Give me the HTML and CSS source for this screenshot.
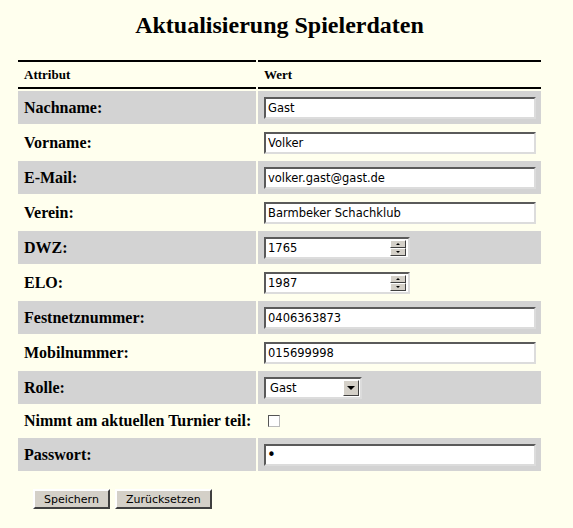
FILE: index.html
```html
<!DOCTYPE html>
<html lang="de">
<head>
<meta charset="utf-8">
<title>Aktualisierung Spielerdaten</title>
<link rel="stylesheet" href="styles.css">
</head>
<body>
<div class="page">
  <h2 class="title">Aktualisierung Spielerdaten</h2>
  <form class="form">
    <table class="grid">
      <colgroup><col class="c1"><col class="c2"></colgroup>
      <thead>
        <tr><th>Attribut</th><th>Wert</th></tr>
      </thead>
      <tbody>
        <tr class="odd"><td class="lbl">Nachname:</td><td><input class="txt" type="text" value="Gast"></td></tr>
        <tr><td class="lbl">Vorname:</td><td><input class="txt" type="text" value="Volker"></td></tr>
        <tr class="odd"><td class="lbl">E-Mail:</td><td><input class="txt" type="text" value="volker.gast@gast.de"></td></tr>
        <tr><td class="lbl">Verein:</td><td><input class="txt" type="text" value="Barmbeker Schachklub"></td></tr>
        <tr class="odd"><td class="lbl">DWZ:</td><td>
          <div class="num"><input class="numin" type="text" value="1765"><span class="spin"><span class="sb"><span class="up"></span></span><span class="sb"><span class="dn"></span></span></span></div>
        </td></tr>
        <tr><td class="lbl">ELO:</td><td>
          <div class="num"><input class="numin" type="text" value="1987"><span class="spin"><span class="sb"><span class="up"></span></span><span class="sb"><span class="dn"></span></span></span></div>
        </td></tr>
        <tr class="odd"><td class="lbl">Festnetznummer:</td><td><input class="txt" type="text" value="0406363873"></td></tr>
        <tr><td class="lbl">Mobilnummer:</td><td><input class="txt" type="text" value="015699998"></td></tr>
        <tr class="odd"><td class="lbl">Rolle:</td><td>
          <div class="sel"><span class="selval">Gast</span><span class="selbtn"><span class="dn"></span></span></div>
        </td></tr>
        <tr class="short"><td class="lbl">Nimmt am aktuellen Turnier teil:</td><td><input class="chk" type="checkbox"></td></tr>
        <tr class="odd"><td class="lbl">Passwort:</td><td><input class="txt pw" type="password" value="x"></td></tr>
      </tbody>
    </table>
    <div class="actions">
      <button type="button" class="btn">Speichern</button>
      <button type="reset" class="btn">Zurücksetzen</button>
    </div>
  </form>
</div>
</body>
</html>
```
FILE: styles.css
```css
html, body {
  margin: 0;
  padding: 0;
  background: #ffffee;
}
body {
  font-family: "Liberation Serif", "Times New Roman", serif;
  color: #000;
}
.page {
  width: 527px;
  padding-left: 16px;
  padding-top: 1px;
}
.title {
  text-align: center;
  font-size: 24px;
  font-weight: bold;
  margin: 11px 0 19px;
  line-height: 27px;
}
.grid {
  border-collapse: separate;
  border-spacing: 2px;
  table-layout: fixed;
  width: 527px;
}
.c1 { width: 238px; }
.c2 { width: 283px; }
.grid th {
  text-align: left;
  font-size: 13px;
  font-weight: bold;
  border-top: 2px solid #000;
  border-bottom: 2px solid #000;
  padding: 0 6px;
}
.grid thead tr { height: 29px; }
.grid tbody tr { height: 33px; }
.grid tbody tr.short { height: 30px; }
.grid td {
  padding: 0 6px;
  vertical-align: middle;
}
.grid tr.odd td { background: #d3d3d3; }
.lbl {
  font-size: 16px;
  font-weight: bold;
  white-space: nowrap;
}
.txt, .numin, .selval, .btn {
  font-family: "DejaVu Sans", Tahoma, sans-serif;
  font-size: 11.5px;
  color: #000;
}
.txt {
  display: block;
  box-sizing: border-box;
  width: 272px;
  height: 22px;
  margin: 0;
  padding: 1px 2px 0;
  border: 2px solid;
  border-color: #5a5a5a #dcdcdc #dcdcdc #5a5a5a;
  background: #fff;
  outline: none;
}
.txt.pw { font-size: 15px; padding-left: 1px; }
.num {
  display: flex;
  align-items: center;
  box-sizing: border-box;
  width: 146px;
  height: 22px;
  border: 2px solid;
  border-color: #5a5a5a #dcdcdc #dcdcdc #5a5a5a;
  background: #fff;
  padding-right: 2px;
}
.numin {
  flex: 1;
  min-width: 0;
  border: 0;
  padding: 1px 2px 0;
  margin: 0;
  background: transparent;
  outline: none;
  height: 18px;
}
.spin {
  display: flex;
  flex-direction: column;
  width: 16px;
}
.sb {
  box-sizing: border-box;
  height: 8px;
  background: #d4d0c8;
  border: 1px solid;
  border-color: #fff #404040 #404040 #fff;
  display: flex;
  align-items: center;
  justify-content: center;
}
.up {
  width: 0; height: 0;
  border-left: 2px solid transparent;
  border-right: 2px solid transparent;
  border-bottom: 2px solid #000;
}
.dn {
  width: 0; height: 0;
  border-left: 2px solid transparent;
  border-right: 2px solid transparent;
  border-top: 2px solid #000;
}
.sel {
  display: flex;
  align-items: center;
  box-sizing: border-box;
  width: 98px;
  height: 22px;
  border: 2px solid;
  border-color: #5a5a5a #dcdcdc #dcdcdc #5a5a5a;
  background: #fff;
  padding-right: 1px;
}
.selval {
  flex: 1;
  padding-left: 4px;
}
.selbtn {
  box-sizing: border-box;
  width: 16px;
  height: 16px;
  background: #d4d0c8;
  border: 1px solid;
  border-color: #fff #404040 #404040 #fff;
  display: flex;
  align-items: center;
  justify-content: center;
}
.selbtn .dn {
  border-left-width: 4px;
  border-right-width: 4px;
  border-top-width: 4px;
}
.chk {
  appearance: none;
  -webkit-appearance: none;
  display: block;
  box-sizing: border-box;
  width: 12px;
  height: 12px;
  margin: 0 0 0 4px;
  border: 1px solid;
  border-color: #555 #bbb #bbb #555;
  background: #fff;
}
.actions {
  display: flex;
  gap: 5px;
  padding-left: 17px;
  margin-top: 16px;
}
.btn {
  box-sizing: border-box;
  height: 20px;
  padding: 0 9px;
  margin: 0;
  background: #d4d0c8;
  border: 2px solid;
  border-color: #fff #404040 #404040 #fff;
  border-radius: 0;
  font-size: 11px;
}
```
